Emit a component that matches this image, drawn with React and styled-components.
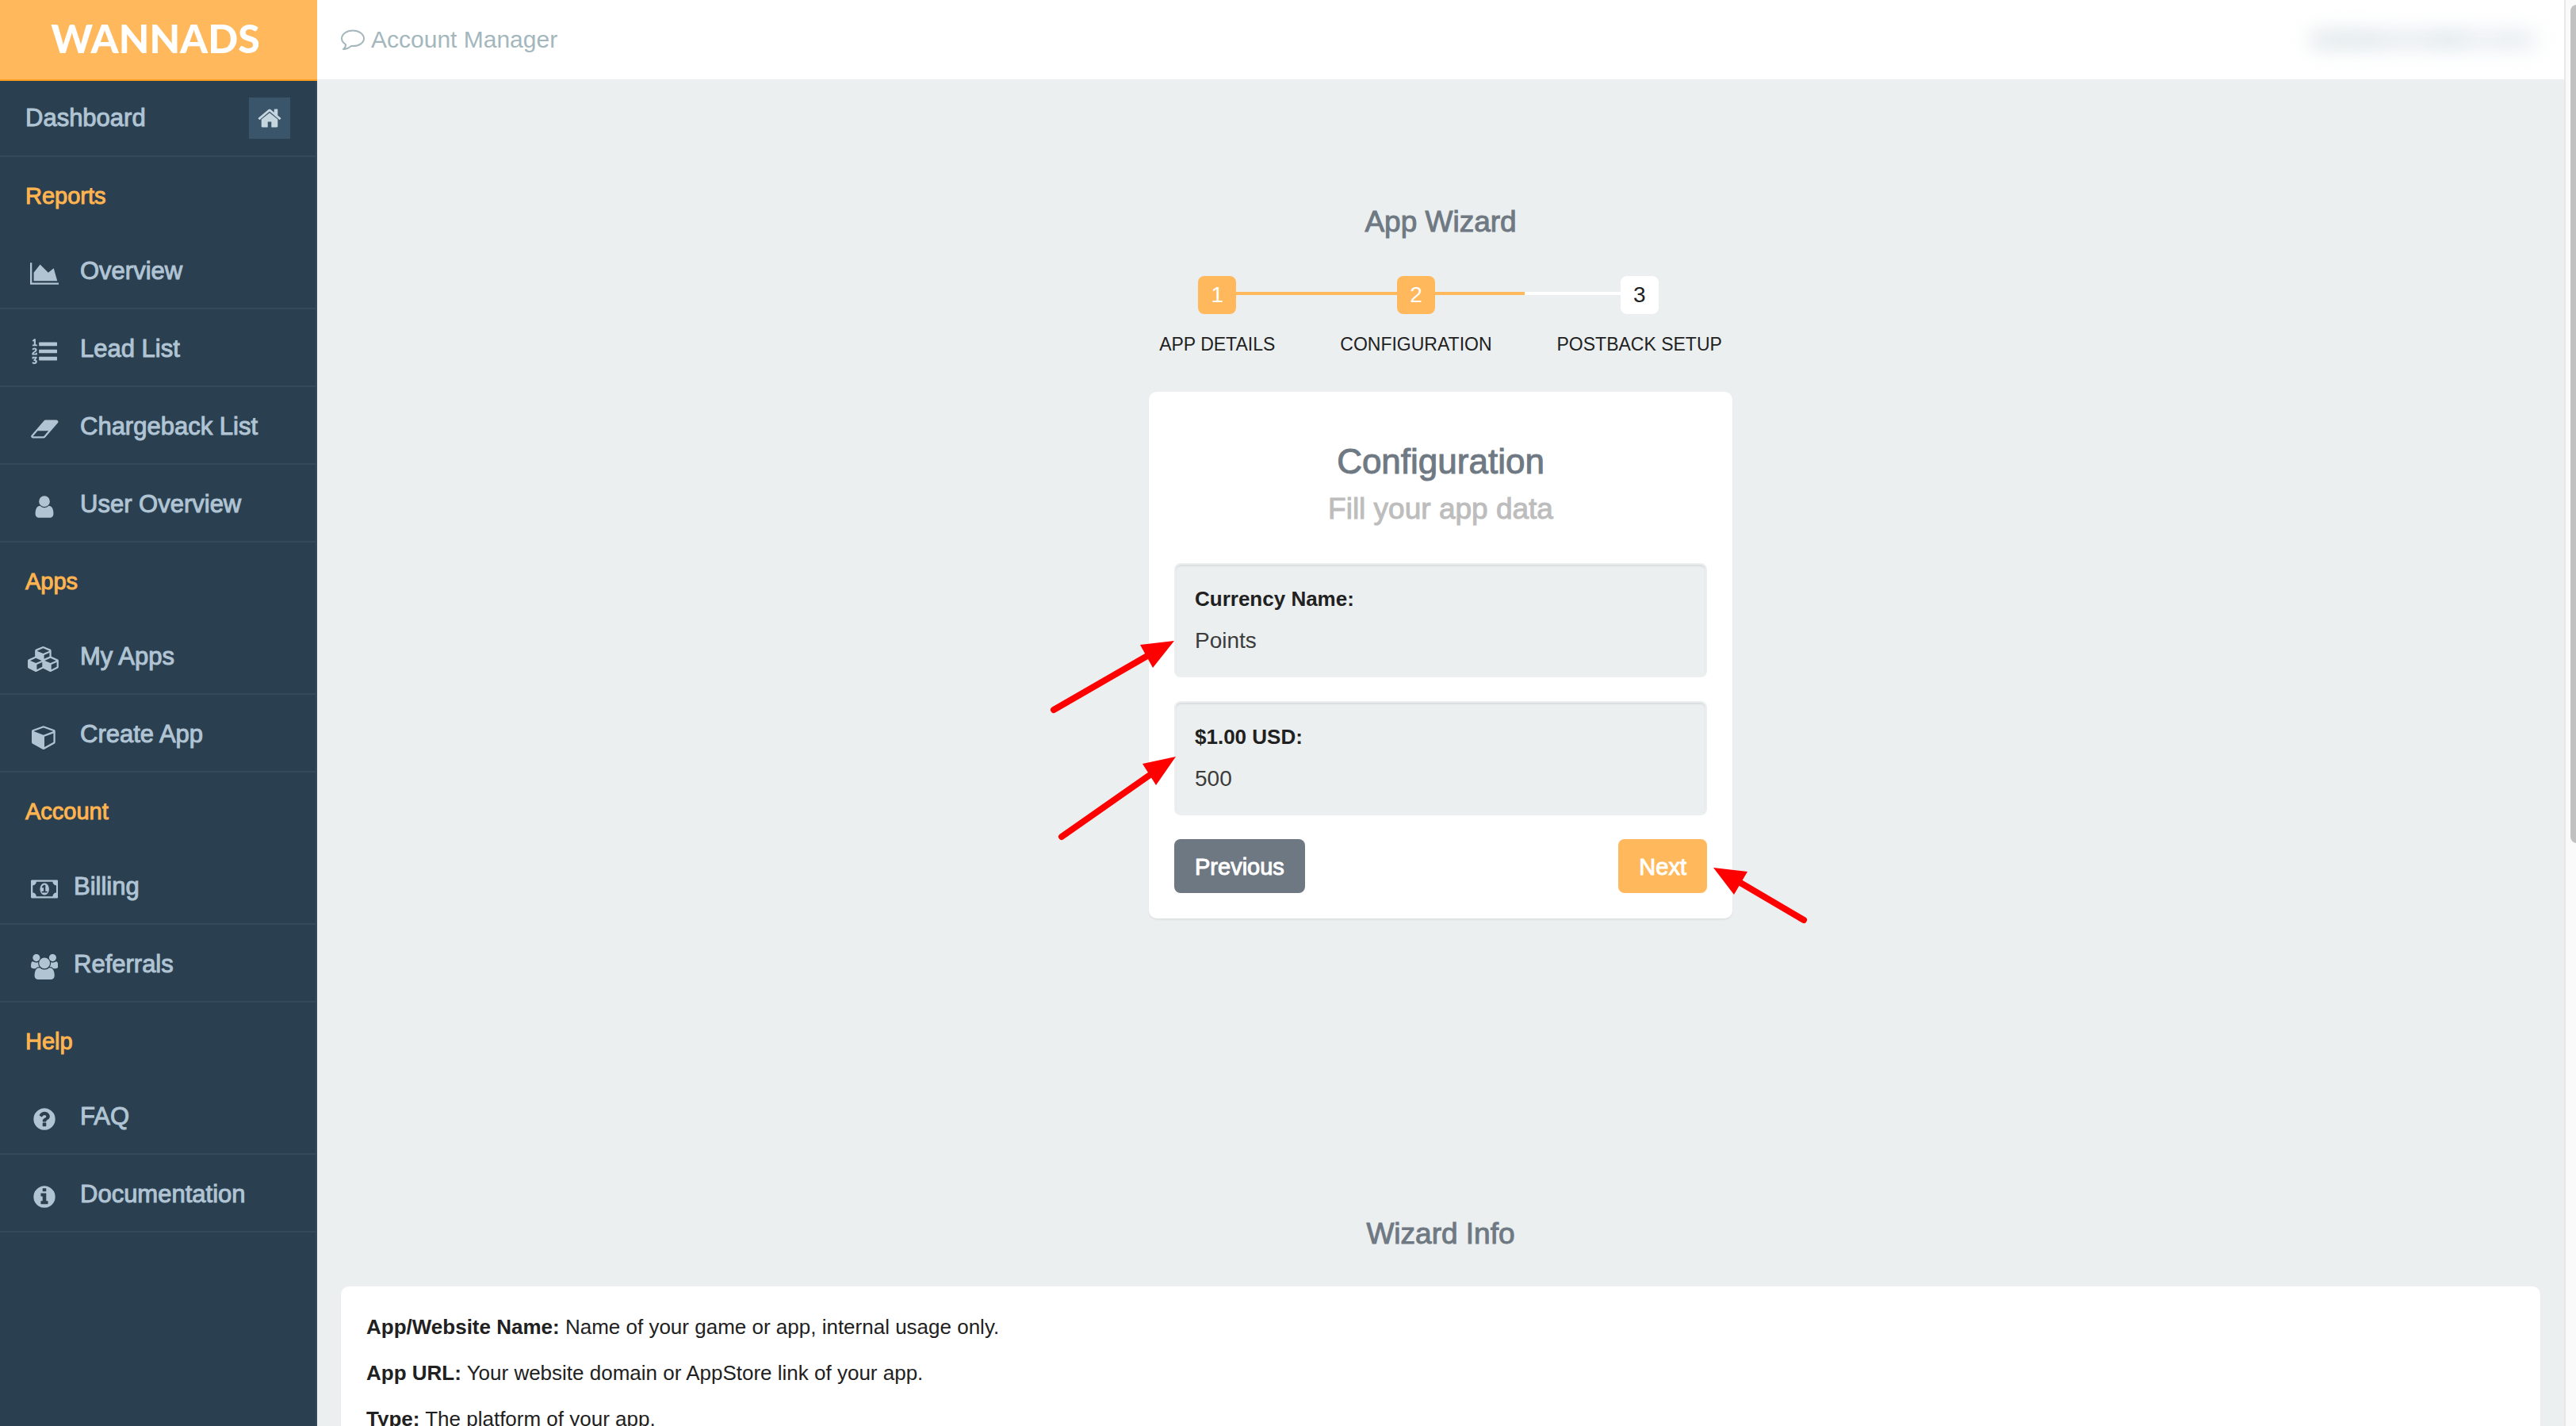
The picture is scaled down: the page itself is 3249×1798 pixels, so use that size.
import React from "react";
import styled, { createGlobalStyle, css } from "styled-components";

const sans = `"Liberation Sans", Arial, Helvetica, sans-serif`;

/* medium weight: regular letters with a thin outline of their own colour */
const medium = css`
  font-weight: 400;
  -webkit-text-stroke: 1px currentColor;
`;

const GlobalStyle = createGlobalStyle`
  *, *::before, *::after { box-sizing: border-box; }
  html, body { margin: 0; height: 100%; overflow: hidden; }
  #root { height: 100%; }
  body { font-family: ${sans}; background: #ebeff0; color: #212121; }
`;

const Page = styled.div`
  display: flex;
  height: 100vh;
  overflow: hidden;
`;

/* ---------- sidebar ---------- */

const Sidebar = styled.aside`
  flex: none;
  width: 400px;
  background: #2a3f4f;
`;

const Brand = styled.a`
  display: flex;
  align-items: center;
  justify-content: center;
  height: 102px;
  padding-right: 8px;
  padding-bottom: 4px;
  background: #ffb85b;
  border-bottom: 2px solid #ff9f22;
  color: #fff;
  font-family: Lato, ${sans};
  font-size: 50px;
  font-weight: 900;
  line-height: 60px;
  text-decoration: none;
`;

const Nav = styled.nav`
  height: calc(100% - 102px);
  border-right: 2px solid #34495b;
`;

const NavHeading = styled.h2`
  ${medium}
  margin: 0;
  padding: 4px 0 0 32px;
  font-size: 29px;
  line-height: 90px;
  color: #ffb450;
`;

const NavLink = styled.a`
  ${medium}
  display: flex;
  align-items: center;
  gap: ${(p) => (p.$tight ? 17 : 25)}px;
  height: ${(p) => (p.$top ? 96 : 98)}px;
  padding: ${(p) => (p.$top ? "0 32px" : "4px 32px 0 36px")};
  border-bottom: 2px solid #34495b;
  color: #b0c4d4;
  font-size: 31px;
  text-decoration: none;
`;

const IconSlot = styled.span`
  display: flex;
  justify-content: center;
  width: 40px;
  padding-top: 6px;
`;

const HomeBadge = styled.span`
  display: flex;
  align-items: center;
  justify-content: center;
  width: 52px;
  height: 52px;
  margin-left: auto;
  background: #3a5469;
  color: #c5d6df;
`;

const Glyph = styled.svg`
  display: block;
  flex: none;
  height: 32px;
  width: auto;
  fill: currentColor;
`;

/* ---------- top bar ---------- */

const Content = styled.div`
  flex: 1;
  min-width: 0;
  display: flex;
  flex-direction: column;
`;

const TopBar = styled.header`
  display: flex;
  flex: none;
  align-items: center;
  justify-content: space-between;
  height: 100px;
  padding: 0 30px;
  background: #fff;
`;

const ManagerLink = styled.a`
  display: flex;
  align-items: center;
  gap: 8px;
  color: #a4b7bc;
  font-size: 30px;
  text-decoration: none;
`;

const Bubble = styled.svg`
  display: block;
  width: 30px;
  height: 26px;
  fill: none;
  stroke: currentColor;
  stroke-width: 2;
  stroke-linejoin: round;
`;

const HiddenAccount = styled.div`
  width: 292px;
  height: 26px;
  border-radius: 13px;
  background: linear-gradient(90deg, #e4ebed, #e2e9ec 25%, #ebeff2 42%, #e1e9ec 62%, #eef2f6 75%, #e6ecf0 88%, #f3f6f7);
  filter: blur(12px);
`;

/* ---------- wizard ---------- */

const Main = styled.main`
  flex: 1;
  padding: 150px 30px 0;
`;

const Title = styled.h1`
  ${medium}
  margin: 0;
  font-size: 37px;
  line-height: 60px;
  text-align: center;
  color: #6f7983;
`;

const Steps = styled.ol`
  display: flex;
  justify-content: center;
  margin: 38px 0 40px;
  padding: 0;
  list-style: none;
`;

const Step = styled.li`
  display: flex;
  flex-direction: column;
  gap: 18px;
`;

const StepTrack = styled.div`
  display: flex;
  align-items: center;
`;

const trackColor = { none: "transparent", done: "#ffb85b", todo: "#fff" };

const StepLine = styled.span`
  flex: 1;
  height: 4px;
  margin-bottom: 4px;
  background: ${(p) => trackColor[p.$state]};
`;

const StepNumber = styled.span`
  width: 48px;
  border-radius: 8px;
  background: ${(p) => (p.$active ? "#ffb85b" : "#fff")};
  color: ${(p) => (p.$active ? "#fff" : "#212121")};
  font-size: 28px;
  line-height: 48px;
  text-align: center;
`;

const StepLabel = styled.span`
  padding: 0 41px;
  font-size: 23px;
  line-height: 40px;
  text-transform: uppercase;
`;

const Card = styled.form`
  position: relative;
  width: 736px;
  margin: 0 auto;
  padding: 58px 32px 32px;
  border-radius: 10px;
  background: #fff;
  box-shadow: 0 2px 2px rgba(0, 0, 0, 0.05);
`;

const CardTitle = styled.h2`
  ${medium}
  margin: 0;
  font-size: 44px;
  line-height: 60px;
  text-align: center;
  color: #6f7983;
`;

const CardSubtitle = styled.p`
  ${medium}
  margin: 0 0 38px;
  font-size: 37px;
  line-height: 60px;
  text-align: center;
  color: #bdbdbd;
`;

const Field = styled.label`
  display: flex;
  flex-direction: column;
  gap: 12px;
  margin-bottom: 30px;
  padding: 24px 24px 22px;
  border: 2px solid #ebeff0;
  border-radius: 8px;
  background: #ebeff0;
  box-shadow: inset 0 2px 2px rgba(0, 0, 0, 0.08);
`;

const FieldName = styled.span`
  font-size: 26px;
  font-weight: 700;
  line-height: 38px;
`;

const FieldInput = styled.input`
  width: 100%;
  height: 44px;
  padding: 0;
  border: 0;
  outline: 0;
  background: transparent;
  color: #3c3c3c;
  font-family: inherit;
  font-size: 28px;
`;

const Actions = styled.div`
  display: flex;
  justify-content: space-between;
`;

const Button = styled.button`
  ${medium}
  height: 68px;
  padding: 2px 26px 0;
  border: 0;
  border-radius: 8px;
  background: ${(p) => (p.$primary ? "#ffb85b" : "#6e7883")};
  color: #fff;
  font-family: inherit;
  font-size: 29px;
`;

const Annotations = styled.svg`
  position: absolute;
  left: 0;
  top: 0;
  width: 100%;
  height: 100%;
  overflow: visible;
  pointer-events: none;
  fill: #f00;
  stroke: #f00;
  stroke-width: 8;
  stroke-linecap: round;
`;

/* ---------- info ---------- */

const Info = styled.section`
  margin-top: 368px;
`;

const InfoCard = styled.div`
  display: flex;
  flex-direction: column;
  gap: 20px;
  margin-top: 36px;
  padding: 32px;
  border-radius: 10px;
  background: #fff;
  box-shadow: 0 2px 2px rgba(0, 0, 0, 0.05);
`;

const InfoLine = styled.p`
  margin: 0;
  font-size: 26px;
  line-height: 38px;
`;

/* ---------- scroll bar ---------- */

const ScrollTrack = styled.div`
  flex: none;
  width: 15px;
  padding: 6px 0 0 6px;
  overflow: hidden;
  border-left: 2px solid #e8e8e8;
  background: #fafafa;
`;

const ScrollThumb = styled.div`
  width: 16px;
  height: 59%;
  border-radius: 8px;
  background: #c1c1c1;
`;

const icons = {
  home: [1792, "M1472 992v480q0 26-19 45t-45 19h-384v-384h-256v384h-384q-26 0-45-19t-19-45v-480q0-1 .5-3t.5-3l575-474 575 474q1 2 1 6zm223-69l-62 74q-8 9-21 11h-3q-13 0-21-7l-692-577-692 577q-12 8-24 7-13-2-21-11l-62-74q-8-10-7-23.5t11-21.5l719-599q32-26 76-26t76 26l244 204v-195q0-14 9-23t23-9h192q14 0 23 9t9 23v408l219 182q10 8 11 21.5t-7 23.5z"],
  areaChart: [2048, "M2048 1536v128h-2048v-1536h128v1408h1920zm-384-1024l256 896h-1664v-576l448-576 576 576z"],
  listOl: [1792, "M381 1620q0 80-54.5 126t-135.5 46q-106 0-172-66l57-88q49 45 106 45 29 0 50.5-14.5t21.5-42.5q0-64-105-56l-26-56q8-10 32.5-43.5t42.5-54 37-38.5v-1q-16 0-48.5 1t-48.5 1v53h-106v-152h333v88l-95 115q51 12 81 49t30 88zm2-627v159h-362q-6-36-6-54 0-51 23.5-93t56.5-68 66-47.5 56.5-43.5 23.5-45q0-25-14.5-38.5t-39.5-13.5q-46 0-81 58l-85-59q24-51 71.5-79.5t105.5-28.5q73 0 123 41.5t50 112.5q0 50-34 91.5t-75 64.5-75.5 50.5-35.5 52.5h127v-60h105zm1409 319v192q0 13-9.5 22.5t-22.5 9.5h-1216q-13 0-22.5-9.5t-9.5-22.5v-192q0-14 9-23t23-9h1216q13 0 22.5 9.5t9.5 22.5zm-1408-899v99h-335v-99h107q0-41 .5-121.5t.5-121.5v-12h-2q-8 17-50 54l-71-76 136-127h106v404h108zm1408 387v192q0 13-9.5 22.5t-22.5 9.5h-1216q-13 0-22.5-9.5t-9.5-22.5v-192q0-14 9-23t23-9h1216q13 0 22.5 9.5t9.5 22.5zm0-512v192q0 13-9.5 22.5t-22.5 9.5h-1216q-13 0-22.5-9.5t-9.5-22.5v-192q0-13 9.5-22.5t22.5-9.5h1216q13 0 22.5 9.5t9.5 22.5z"],
  eraser: [1984, "M960 1408l336-384h-768l-336 384h768zm1013-1077q15 34 9.5 71.5t-30.5 65.5l-896 1024q-38 44-96 44h-768q-38 0-69.5-20.5t-47.5-54.5q-15-34-9.5-71.5t30.5-65.5l896-1024q38-44 96-44h768q38 0 69.5 20.5t47.5 54.5z"],
  user: [1792, "M1536 1399q0 109-62.5 187t-150.5 78h-854q-88 0-150.5-78t-62.5-187q0-85 8.5-160.5t31.5-152 58.5-131 94-89 134.5-34.5q131 128 313 128t313-128q76 0 134.5 34.5t94 89 58.5 131 31.5 152 8.5 160.5zm-256-887q0 159-112.5 271.5t-271.5 112.5-271.5-112.5-112.5-271.5 112.5-271.5 271.5-112.5 271.5 112.5 112.5 271.5z"],
  cubes: [2304, "M640 1632l384-192v-314l-384 164v342zm-64-454l404-173-404-173-404 173zm1088 454l384-192v-314l-384 164v342zm-64-454l404-173-404-173-404 173zm-448-293l384-165v-266l-384 164v267zm-64-379l441-189-441-189-441 189zm1088 518v416q0 36-19 67t-52 47l-448 224q-25 14-57 14t-57-14l-448-224q-4-2-7-4-2 2-7 4l-448 224q-25 14-57 14t-57-14l-448-224q-33-16-52-47t-19-67v-416q0-38 21.5-70t56.5-48l434-186v-400q0-38 21.5-70t56.5-48l448-192q23-10 50-10t50 10l448 192q35 16 56.5 48t21.5 70v400l434 186q36 16 57 48t21 70z"],
  cube: [1792, "M896 1629l640-349v-636l-640 233v752zm-64-865l698-254-698-254-698 254zm832-252v768q0 35-18 65t-49 47l-704 384q-28 16-61 16t-61-16l-704-384q-31-17-49-47t-18-65v-768q0-40 23-73t61-47l704-256q22-8 44-8t44 8l704 256q38 14 61 47t23 73z"],
  money: [1920, "M768 1152h384v-96h-128v-448h-114l-148 137 77 80q42-37 55-57h2v288h-128v96zm512-256q0 70-21 142t-59.5 134-101.5 101-138 39-138-39-101.5-101-59.5-134-21-142 21-142 59.5-134 101.5-101 138-39 138 39 101.5 101 59.5 134 21 142zm512 256v-512q-106 0-181-75t-75-181h-1152q0 106-75 181t-181 75v512q106 0 181 75t75 181h1152q0-106 75-181t181-75zm128-832v1152q0 26-19 45t-45 19h-1792q-26 0-45-19t-19-45v-1152q0-26 19-45t45-19h1792q26 0 45 19t19 45z"],
  users: [1920, "M593 896q-162 5-265 128h-134q-82 0-138-40.5t-56-118.5q0-353 124-353 6 0 43.5 21t97.5 42.5 119 21.5q67 0 133-23-5 37-5 66 0 139 81 256zm1071 637q0 120-73 189.5t-194 69.5h-874q-121 0-194-69.5t-73-189.5q0-53 3.5-103.5t14-109 26.5-108.5 43-97.5 62-81 85.5-53.5 111.5-20q10 0 43 21.5t73 48 107 48 135 21.5 135-21.5 107-48 73-48 43-21.5q61 0 111.5 20t85.5 53.5 62 81 43 97.5 26.5 108.5 14 109 3.5 103.5zm-1024-1277q0 106-75 181t-181 75-181-75-75-181 75-181 181-75 181 75 75 181zm704 384q0 159-112.5 271.5t-271.5 112.5-271.5-112.5-112.5-271.5 112.5-271.5 271.5-112.5 271.5 112.5 112.5 271.5zm576 225q0 78-56 118.5t-138 40.5h-134q-103-123-265-128 81-117 81-256 0-29-5-66 66 23 133 23 59 0 119-21.5t97.5-42.5 43.5-21q124 0 124 353zm-128-609q0 106-75 181t-181 75-181-75-75-181 75-181 181-75 181 75 75 181z"],
  question: [1792, "M1024 1376v-192q0-14-9-23t-23-9h-192q-14 0-23 9t-9 23v192q0 14 9 23t23 9h192q14 0 23-9t9-23zm256-672q0-88-55.5-163t-138.5-116-170-41q-243 0-371 213-15 24 8 42l132 100q7 6 19 6 16 0 25-12 53-68 86-92 34-24 86-24 48 0 85.5 26t37.5 59q0 38-20 61t-68 45q-63 28-115.5 86.5t-52.5 125.5v36q0 14 9 23t23 9h192q14 0 23-9t9-23q0-19 21.5-49.5t54.5-49.5q32-18 49-28.5t46-35 44.5-48 28-60.5 12.5-81zm384 192q0 209-103 385.5t-279.5 279.5-385.5 103-385.5-103-279.5-279.5-103-385.5 103-385.5 279.5-279.5 385.5-103 385.5 103 279.5 279.5 103 385.5z"],
  info: [1792, "M1152 1376v-160q0-14-9-23t-23-9h-96v-512q0-14-9-23t-23-9h-320q-14 0-23 9t-9 23v160q0 14 9 23t23 9h96v320h-96q-14 0-23 9t-9 23v160q0 14 9 23t23 9h448q14 0 23-9t9-23zm-128-896v-160q0-14-9-23t-23-9h-192q-14 0-23 9t-9 23v160q0 14 9 23t23 9h192q14 0 23-9t9-23zm640 416q0 209-103 385.5t-279.5 279.5-385.5 103-385.5-103-279.5-279.5-103-385.5 103-385.5 279.5-279.5 385.5-103 385.5 103 279.5 279.5 103 385.5z"],
};

function Icon({ name }) {
  const [width, d] = icons[name];
  return (
    <Glyph viewBox={`0 0 ${width} 1792`} aria-hidden="true">
      <path d={d} />
    </Glyph>
  );
}

const sections = [
  { title: "Reports", items: [["areaChart", "Overview"], ["listOl", "Lead List"], ["eraser", "Chargeback List"], ["user", "User Overview"]] },
  { title: "Apps", items: [["cubes", "My Apps"], ["cube", "Create App"]] },
  { title: "Account", tight: true, items: [["money", "Billing"], ["users", "Referrals"]] },
  { title: "Help", items: [["question", "FAQ"], ["info", "Documentation"]] },
];

const steps = [
  { label: "App Details", active: true, before: "none", after: "done" },
  { label: "Configuration", active: true, before: "done", after: "done" },
  { label: "Postback Setup", active: false, before: "todo", after: "none" },
];

const arrows = [
  { from: [-120, 401], to: [-2, 333], head: "32,314 -11,319 5,348" },
  { from: [-110, 561], to: [0, 484], head: "34,460 -8,469 9,496" },
  { from: [826, 666], to: [746, 619], head: "712,600 755,605 738,634" },
];

const notes = [
  ["App/Website Name:", "Name of your game or app, internal usage only."],
  ["App URL:", "Your website domain or AppStore link of your app."],
  ["Type:", "The platform of your app."],
];

export default function App() {
  return (
    <>
      <GlobalStyle />
      <Page>
        <Sidebar>
          <Brand href="#home">WANNADS</Brand>
          <Nav>
            <NavLink href="#dashboard" $top>
              Dashboard
              <HomeBadge><Icon name="home" /></HomeBadge>
            </NavLink>
            {sections.map((section) => (
              <React.Fragment key={section.title}>
                <NavHeading>{section.title}</NavHeading>
                {section.items.map(([icon, label]) => (
                  <NavLink key={label} href="#menu" $tight={section.tight}>
                    <IconSlot><Icon name={icon} /></IconSlot>
                    {label}
                  </NavLink>
                ))}
              </React.Fragment>
            ))}
          </Nav>
        </Sidebar>
        <Content>
          <TopBar>
            <ManagerLink href="#manager">
              <Bubble viewBox="0 0 30 26" aria-hidden="true">
                <path d="M13 21C10 23.500 6.500 25 3 25c2-1.500 3.200-3.500 3-6C3 17.200 1 14.500 1 11.500 1 6 7.200 1.500 15 1.500S29 6 29 11.500 22.800 21 15 21z" />
              </Bubble>
              Account Manager
            </ManagerLink>
            <HiddenAccount />
          </TopBar>
          <Main>
            <Title>App Wizard</Title>
            <Steps>
              {steps.map((step, i) => (
                <Step key={step.label}>
                  <StepTrack>
                    <StepLine $state={step.before} />
                    <StepNumber $active={step.active}>{i + 1}</StepNumber>
                    <StepLine $state={step.after} />
                  </StepTrack>
                  <StepLabel>{step.label}</StepLabel>
                </Step>
              ))}
            </Steps>
            <Card>
              <CardTitle>Configuration</CardTitle>
              <CardSubtitle>Fill your app data</CardSubtitle>
              <Field>
                <FieldName>Currency Name:</FieldName>
                <FieldInput defaultValue="Points" />
              </Field>
              <Field>
                <FieldName>$1.00 USD:</FieldName>
                <FieldInput defaultValue="500" />
              </Field>
              <Actions>
                <Button type="button">Previous</Button>
                <Button type="button" $primary>Next</Button>
              </Actions>
              <Annotations aria-hidden="true">
                {arrows.map(({ from, to, head }) => (
                  <g key={head}>
                    <line x1={from[0]} y1={from[1]} x2={to[0]} y2={to[1]} />
                    <polygon points={head} stroke="none" />
                  </g>
                ))}
              </Annotations>
            </Card>
            <Info>
              <Title as="h2">Wizard Info</Title>
              <InfoCard>
                {notes.map(([term, text]) => (
                  <InfoLine key={term}><b>{term}</b> {text}</InfoLine>
                ))}
              </InfoCard>
            </Info>
          </Main>
        </Content>
        <ScrollTrack><ScrollThumb /></ScrollTrack>
      </Page>
    </>
  );
}
